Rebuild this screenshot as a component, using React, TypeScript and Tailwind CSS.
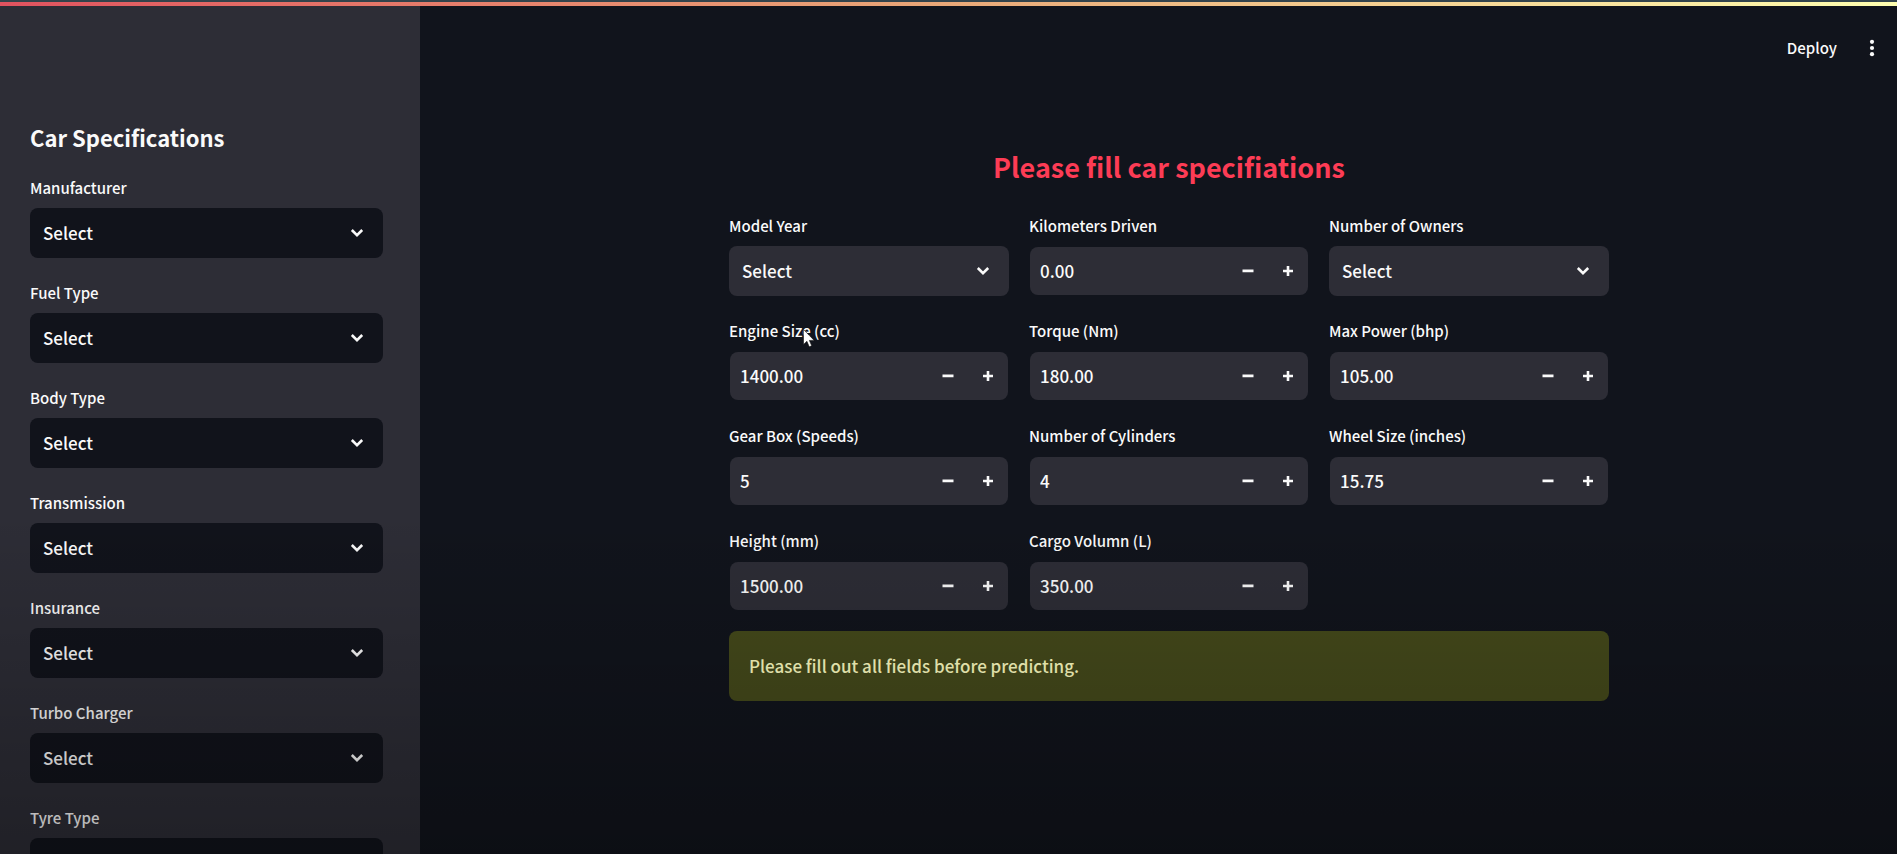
import { useId, useState } from "react";

function Chevron() {
  return (
    <svg
      viewBox="0 0 18 18"
      className="pointer-events-none col-start-1 row-start-1 mr-[17px] size-[18px] justify-self-end text-[#fafafa]"
      fill="none"
      stroke="currentColor"
      strokeWidth="2.6"
      aria-hidden="true"
    >
      <path d="M3.8 6 9 11.2 14.2 6" />
    </svg>
  );
}

function Label({ id, text }: { id: string; text: string }) {
  return (
    <label htmlFor={id} className="h-8 text-[15px] leading-6">
      {text}
    </label>
  );
}

function SelectField({ label, tone }: { label: string; tone: string }) {
  const id = useId();
  return (
    <div className="flex flex-col">
      <Label id={id} text={label} />
      <div className="grid items-center">
        <select
          id={id}
          className={`col-start-1 row-start-1 h-[50px] w-full appearance-none rounded-lg pr-12 pl-[13px] text-[17px] outline-none ${tone}`}
        >
          <option>Select</option>
        </select>
        <Chevron />
      </div>
    </div>
  );
}

function NumberField({ label, initial }: { label: string; initial: string }) {
  const id = useId();
  const [value, setValue] = useState(initial);
  const decimals = initial.includes(".") ? 2 : 0;
  const step = (by: number) => setValue((Number(value) + by).toFixed(decimals));
  return (
    <div className="flex flex-col">
      <Label id={id} text={label} />
      <div className="m-px flex h-12 overflow-hidden rounded-lg bg-[#2d2d36]">
        <input
          id={id}
          inputMode="decimal"
          value={value}
          onChange={(e) => setValue(e.target.value)}
          className="min-w-0 flex-1 bg-transparent pl-2.5 text-[17px] outline-none"
        />
        <button type="button" aria-label={`Decrease ${label}`} onClick={() => step(-1)} className="grid w-10 place-items-center">
          <svg viewBox="0 0 12 12" className="size-3" fill="currentColor" aria-hidden="true">
            <path d="M.5 4.6h11v2.6H.5z" />
          </svg>
        </button>
        <button type="button" aria-label={`Increase ${label}`} onClick={() => step(1)} className="grid w-10 place-items-center">
          <svg viewBox="0 0 12 12" className="size-3" fill="currentColor" aria-hidden="true">
            <path d="M4.7 1h2.6v3.7H11v2.6H7.3V11H4.7V7.3H1V4.7h3.7z" />
          </svg>
        </button>
      </div>
    </div>
  );
}

const sidebarFields = [
  "Manufacturer",
  "Fuel Type",
  "Body Type",
  "Transmission",
  "Insurance",
  "Turbo Charger",
  "Tyre Type",
];

const mainFields: { label: string; value?: string }[] = [
  { label: "Model Year" },
  { label: "Kilometers Driven", value: "0.00" },
  { label: "Number of Owners" },
  { label: "Engine Size (cc)", value: "1400.00" },
  { label: "Torque (Nm)", value: "180.00" },
  { label: "Max Power (bhp)", value: "105.00" },
  { label: "Gear Box (Speeds)", value: "5" },
  { label: "Number of Cylinders", value: "4" },
  { label: "Wheel Size (inches)", value: "15.75" },
  { label: "Height (mm)", value: "1500.00" },
  { label: "Cargo Volumn (L)", value: "350.00" },
];

export default function App() {
  return (
    <div className="relative flex h-screen flex-col overflow-hidden bg-[#11141c] font-['Noto_Sans_CJK_SC',sans-serif] font-medium text-[#fafafa]">
      <div className="h-1.5 shrink-0 border-t-2 border-[#33434b] bg-linear-to-r from-[#e0525f] via-[#e9a878] to-[#ffffb0]" />
      <div className="flex min-h-0 flex-1">
        <aside className="w-[420px] shrink-0 overflow-hidden bg-[#2d2d36] pt-[113px] pr-[37px] pl-[30px]">
          <h2 className="mb-[21px] text-[22px] leading-9 font-bold">Car Specifications</h2>
          <div className="flex flex-col gap-[23px]">
            {sidebarFields.map((label) => (
              <SelectField key={label} label={label} tone="bg-[#11131b]" />
            ))}
          </div>
        </aside>
        <div className="flex min-w-0 flex-1 flex-col">
          <header className="flex h-[84px] shrink-0 items-center justify-end gap-[25px] pr-[15px]">
            <button type="button" className="text-[15px] leading-6">Deploy</button>
            <button type="button" aria-label="Menu" className="grid w-5 place-items-center">
              <svg viewBox="0 0 6 18" className="h-[18px] w-1.5" fill="currentColor" aria-hidden="true">
                <circle cx="3" cy="2.8" r="2.1" />
                <circle cx="3" cy="9" r="2.1" />
                <circle cx="3" cy="15.2" r="2.1" />
              </svg>
            </button>
          </header>
          <main className="pt-[55px] pl-[21px]">
            <div className="mx-auto w-full max-w-[880px]">
              <h1 className="mb-[25px] text-center text-[27px] leading-[44px] font-bold text-[#fd3c55]">
                Please fill car specifiations
              </h1>
              <div className="grid grid-cols-3 gap-x-5 gap-y-[23px]">
                {mainFields.map(({ label, value }) =>
                  value === undefined ? (
                    <SelectField key={label} label={label} tone="bg-[#2d2d36]" />
                  ) : (
                    <NumberField key={label} label={label} initial={value} />
                  ),
                )}
              </div>
              <p role="alert" className="mt-5 rounded-lg bg-[#454a1b] px-5 py-[22px] text-[17px] leading-[26px] text-[#ffffc2]">
                Please fill out all fields before predicting.
              </p>
            </div>
          </main>
        </div>
      </div>
      <div className="pointer-events-none absolute inset-x-0 bottom-0 h-2/5 bg-linear-to-b from-transparent to-black/28" />
      <svg viewBox="0 0 12 19" className="pointer-events-none absolute top-[329px] left-[803px] h-[19px] w-3" aria-hidden="true">
        <path d="M.5.5v15l3.4-3.2 2.3 5.5 2.5-1-2.3-5.4h4.8z" fill="#fff" stroke="#111" strokeWidth=".6" />
      </svg>
    </div>
  );
}
